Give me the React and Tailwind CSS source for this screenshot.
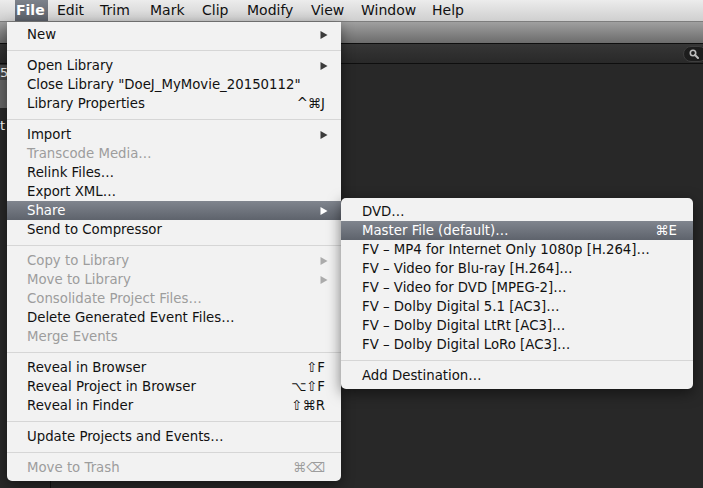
const font = { fontFamily: '"DejaVu Sans", "Liberation Sans", sans-serif' };

const fileMenu = [
  { label: 'New', arrow: true },
  'sep',
  { label: 'Open Library', arrow: true },
  { label: 'Close Library "DoeJ_MyMovie_20150112"' },
  { label: 'Library Properties', keys: '^⌘J' },
  'sep',
  { label: 'Import', arrow: true },
  { label: 'Transcode Media…', disabled: true },
  { label: 'Relink Files…' },
  { label: 'Export XML…' },
  { label: 'Share', arrow: true, active: true },
  { label: 'Send to Compressor' },
  'sep',
  { label: 'Copy to Library', arrow: true, disabled: true },
  { label: 'Move to Library', arrow: true, disabled: true },
  { label: 'Consolidate Project Files…', disabled: true },
  { label: 'Delete Generated Event Files…' },
  { label: 'Merge Events', disabled: true },
  'sep',
  { label: 'Reveal in Browser', keys: '⇧F' },
  { label: 'Reveal Project in Browser', keys: '⌥⇧F' },
  { label: 'Reveal in Finder', keys: '⇧⌘R' },
  'sep',
  { label: 'Update Projects and Events…' },
  'sep',
  { label: 'Move to Trash', keys: '⌘⌫', disabled: true },
];

const shareMenu = [
  { label: 'DVD…' },
  { label: 'Master File (default)…', keys: '⌘E', active: true },
  { label: 'FV – MP4 for Internet Only 1080p [H.264]…' },
  { label: 'FV – Video for Blu-ray [H.264]…' },
  { label: 'FV – Video for DVD [MPEG-2]…' },
  { label: 'FV – Dolby Digital 5.1 [AC3]…' },
  { label: 'FV – Dolby Digital LtRt [AC3]…' },
  { label: 'FV – Dolby Digital LoRo [AC3]…' },
  'sep',
  { label: 'Add Destination…' },
];

const menubar = [
  { label: 'Edit', w: 'w-[43px]' },
  { label: 'Trim', w: 'w-[50px]' },
  { label: 'Mark', w: 'w-[52px]' },
  { label: 'Clip', w: 'w-[45px]' },
  { label: 'Modify', w: 'w-[64px]' },
  { label: 'View', w: 'w-[50px]' },
  { label: 'Window', w: 'w-[71px]' },
  { label: 'Help', w: 'w-[60px]' },
];

function Arrow({ color }) {
  return (
    <svg width="8" height="10" viewBox="0 0 8 10" className="shrink-0">
      <polygon points="0.5,1 7.5,5 0.5,9" fill={color} />
    </svg>
  );
}

function MenuRow({ item, pl }) {
  if (item === 'sep') {
    return (
      <div className="h-[12px] flex items-center">
        <div className="h-px w-full bg-[#d6d6d6]" />
      </div>
    );
  }
  const text = item.active ? 'text-white' : item.disabled ? 'text-[#9d9d9d]' : 'text-[#111]';
  const arrowColor = item.active ? '#ffffff' : item.disabled ? '#ababab' : '#3b3b3b';
  return (
    <div
      className={`h-[19px] flex items-center justify-between pr-[13px] ${pl} ${text} ${
        item.active ? 'bg-gradient-to-b from-[#80858e] to-[#5e636c]' : ''
      }`}
    >
      <span className="whitespace-nowrap leading-[19px]">{item.label}</span>
      {item.arrow && <Arrow color={arrowColor} />}
      {item.keys && <span className="mr-[3px] whitespace-nowrap leading-[19px]">{item.keys}</span>}
    </div>
  );
}

export default function App() {
  return (
    <div className="relative w-[703px] h-[488px] overflow-hidden bg-[#282828] text-[13.3px]" style={font}>
      {/* menubar */}
      <div className="h-[22px] flex items-stretch bg-gradient-to-b from-[#ececec] to-[#cfcfcf] border-b border-[#7d7d7d] text-[14px] text-[#111]">
        <div className="w-[15px]" />
        <div className="w-[33px] pl-[1px] flex items-center bg-gradient-to-b from-[#7d828b] to-[#5b6069] text-white font-bold">
          File
        </div>
        <div className="w-[9px]" />
        {menubar.map((m) => (
          <div key={m.label} className={`${m.w} flex items-center`}>
            {m.label}
          </div>
        ))}
      </div>

      {/* app toolbar */}
      <div className="h-[22px] bg-gradient-to-b from-[#a0a0a0] to-[#6c6c6c] border-b border-[#0e0e0e]" />
      <div className="h-[20px] bg-gradient-to-b from-[#363636] to-[#292929] border-b border-[#0e0e0e] flex items-center justify-end">
        <div className="w-[24px] h-[16px] -mr-[4px] rounded-full bg-[#1d1d1d] border border-[#3e3e3e] flex items-center pl-[5px]">
          <svg width="10" height="10" viewBox="0 0 10 10">
            <circle cx="4" cy="4" r="2.7" fill="none" stroke="#bdbdbd" strokeWidth="1.6" />
            <line x1="6" y1="6" x2="9" y2="9" stroke="#bdbdbd" strokeWidth="2" strokeLinecap="round" />
          </svg>
        </div>
      </div>
      <div className="flex">
        <div className="w-[51px] border-r border-[#111] h-[424px] flex flex-col">
          <div className="h-[1px]" />
          <div className="h-[15px] bg-[#4a4a4a] text-white text-[13px] leading-[15px]">5</div>
          <div className="h-[28px] bg-[#666]" />
          <div className="h-[10px]" />
          <div className="text-white text-[13px] leading-[15px]">t</div>
        </div>
      </div>

      {/* File menu */}
      <div className="absolute left-[7px] top-[22px] w-[334px] pt-[3px] pb-[4px] bg-[#f2f2f2] rounded-b-[5px] shadow-[0_4px_14px_rgba(0,0,0,0.45)]">
        {fileMenu.map((item, i) => (
          <MenuRow key={i} item={item} pl="pl-[20px]" />
        ))}
      </div>

      {/* Share submenu */}
      <div className="absolute left-[341px] top-[198px] w-[352px] pt-[4px] pb-[4px] bg-[#f2f2f2] rounded-[5px] shadow-[0_4px_14px_rgba(0,0,0,0.5)]">
        {shareMenu.map((item, i) => (
          <MenuRow key={i} item={item} pl="pl-[21px]" />
        ))}
      </div>
    </div>
  );
}
